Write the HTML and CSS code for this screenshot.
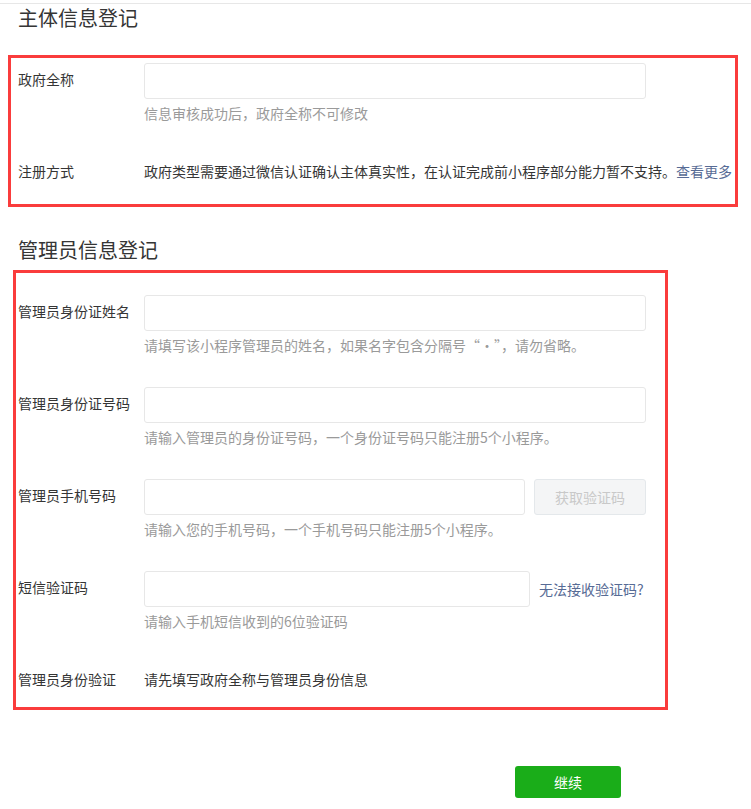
FILE: index.html
```html
<!DOCTYPE html>
<html lang="zh-CN">
  <head>
    <meta charset="UTF-8" />
    <meta name="viewport" content="width=device-width, initial-scale=1.0" />
    <title>主体信息登记</title>
    <link rel="stylesheet" href="styles.css">
  </head>
  <body>
    <div class="topline"></div>
    <div class="page">
      <h2 class="title">主体信息登记</h2>
      <div class="section">
        <div class="row">
          <label class="label" for="gov-name">政府全称</label>
          <div class="field">
            <input class="input" type="text" id="gov-name" />
            <div class="hint">信息审核成功后，政府全称不可修改</div>
          </div>
        </div>
        <div class="row">
          <div class="label">注册方式</div>
          <div class="field text">
            政府类型需要通过微信认证确认主体真实性，在认证完成前小程序部分能力暂不支持。<a href="#" class="link">查看更多</a>
          </div>
        </div>
      </div>

      <h2 class="title title-second">管理员信息登记</h2>
      <div class="section">
        <div class="row">
          <label class="label" for="admin-name">管理员身份证姓名</label>
          <div class="field">
            <input class="input" type="text" id="admin-name" />
            <div class="hint">请填写该小程序管理员的姓名，如果名字包含分隔号“·”，请勿省略。</div>
          </div>
        </div>
        <div class="row">
          <label class="label" for="admin-id">管理员身份证号码</label>
          <div class="field">
            <input class="input" type="text" id="admin-id" />
            <div class="hint">请输入管理员的身份证号码，一个身份证号码只能注册5个小程序。</div>
          </div>
        </div>
        <div class="row">
          <label class="label" for="admin-phone">管理员手机号码</label>
          <div class="field">
            <div class="inline">
              <input class="input input-phone" type="text" id="admin-phone" />
              <button class="btn-code" disabled>获取验证码</button>
            </div>
            <div class="hint">请输入您的手机号码，一个手机号码只能注册5个小程序。</div>
          </div>
        </div>
        <div class="row">
          <label class="label" for="sms-code">短信验证码</label>
          <div class="field">
            <div class="inline">
              <input class="input input-code" type="text" id="sms-code" />
              <a href="#" class="link">无法接收验证码?</a>
            </div>
            <div class="hint">请输入手机短信收到的6位验证码</div>
          </div>
        </div>
        <div class="row">
          <div class="label">管理员身份验证</div>
          <div class="field text">请先填写政府全称与管理员身份信息</div>
        </div>
      </div>

      <div class="footer">
        <button class="btn-primary">继续</button>
      </div>
    </div>

    <div class="mark mark-first"></div>
    <div class="mark mark-second"></div>
  </body>
</html>
```

FILE: styles.css
```css
body {
  margin: 0;
  background-color: #fff;
  color: #353535;
  font-family: "Noto Sans CJK SC", "Noto Sans", sans-serif;
  font-size: 14px;
  position: relative;
  min-height: 809px;
}
.topline {
  height: 3px;
  border-bottom: 1px solid #e7e7e7;
}
.page {
  padding-left: 18px;
}
.title {
  margin: 0;
  font-size: 20px;
  font-weight: normal;
  line-height: 28px;
  color: #353535;
}
/* row margin collapses into this one */
.title-second {
  margin-top: 45px;
}
.section {
  padding-top: 31px;
}
.row {
  display: flex;
  margin-bottom: 31px;
}
.label {
  width: 126px;
  flex-shrink: 0;
  line-height: 32px;
  padding-bottom: 4px;
  white-space: nowrap;
}
.field {
  width: 502px;
}
.field.text {
  width: auto;
  line-height: 32px;
  padding-bottom: 4px;
  white-space: nowrap;
}
.input {
  display: block;
  width: 100%;
  height: 36px;
  box-sizing: border-box;
  border: 1px solid #e7e7e7;
  border-radius: 3px;
  padding: 0 10px;
  font-size: 14px;
  font-family: inherit;
  outline: none;
}
.hint {
  margin-top: 4px;
  margin-bottom: 1px;
  line-height: 20px;
  color: #9a9a9a;
}
.inline {
  display: flex;
  align-items: center;
  gap: 9px;
}
.input-phone {
  width: 381px;
}
.input-code {
  width: 386px;
}
.link {
  color: #576b95;
  text-decoration: none;
  white-space: nowrap;
}
.btn-code {
  width: 112px;
  height: 36px;
  border: 1px solid #e4e8eb;
  border-radius: 3px;
  background-color: #f4f5f6;
  color: #c9c9c9;
  font-size: 14px;
  font-family: inherit;
}
.footer {
  margin-top: 67px;
  padding-left: 497px;
}
.btn-primary {
  width: 106px;
  height: 32px;
  border: none;
  border-radius: 3px;
  background-color: #1aad19;
  color: #fff;
  font-size: 14px;
  font-family: inherit;
  cursor: pointer;
}
.mark {
  position: absolute;
  border: 3px solid #fa3c3c;
  box-sizing: border-box;
  pointer-events: none;
}
.mark-first {
  left: 8px;
  top: 55px;
  width: 730px;
  height: 152px;
}
.mark-second {
  left: 13px;
  top: 270px;
  width: 655px;
  height: 440px;
}
```
